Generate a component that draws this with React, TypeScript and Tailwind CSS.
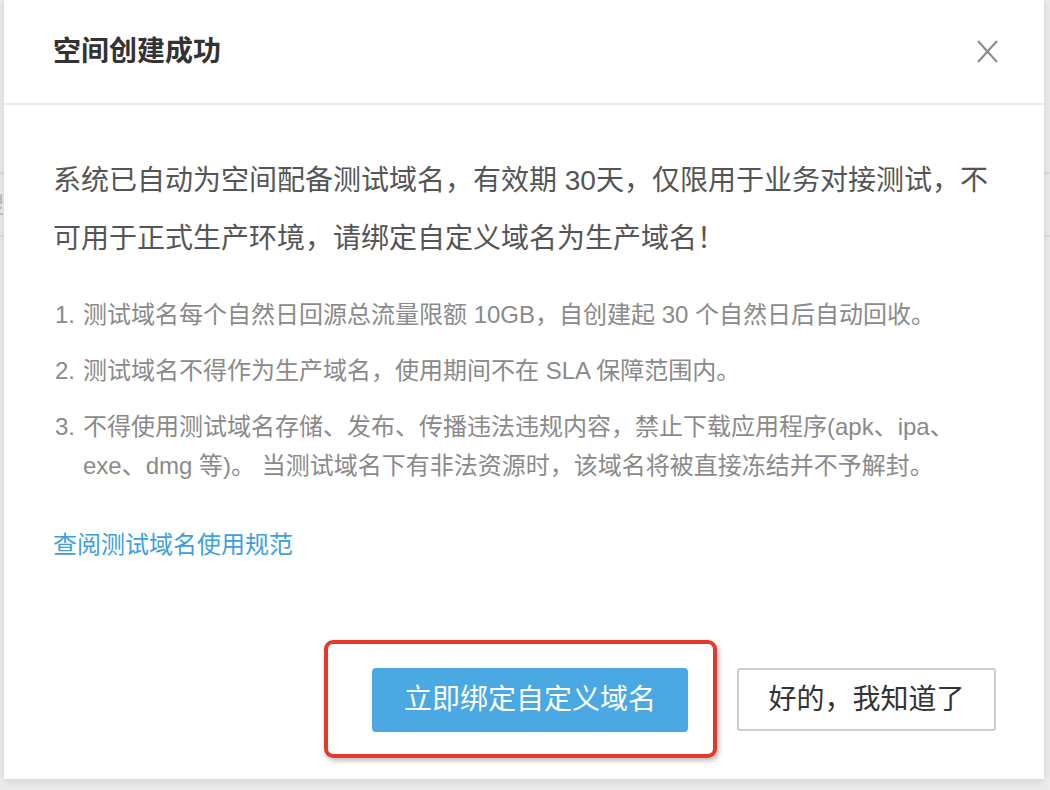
import React from "react";

const font = { fontFamily: '"Liberation Sans", "Noto Sans CJK SC", sans-serif' };

export default function App() {
  return (
    <div className="relative w-[1050px] h-[790px] overflow-hidden bg-[#ececec]" style={font}>
      {/* page behind the modal */}
      <div className="flex flex-col pt-[172px]">
        <div className="h-[2px] bg-[#dedede]" />
        <div className="h-[61px] text-[24px] leading-[61px] text-[#bbb] -ml-[20px]">搜</div>
        <div className="h-[2px] bg-[#dedede]" />
      </div>

      {/* modal */}
      <div className="absolute left-[4px] top-0 w-[1040px] h-[779px] bg-white shadow-[0_2px_10px_rgba(0,0,0,0.12)] flex flex-col">
        <div className="h-[105px] shrink-0 flex items-center justify-between pl-[49px] pr-[46px] border-b-2 border-[#ebebeb]">
          <div className="text-[28px] font-semibold text-[#333] leading-none">空间创建成功</div>
          <svg width="21" height="23" viewBox="0 0 21 23" className="mt-[-1px]">
            <path d="M1 1 L20 22 M20 1 L1 22" stroke="#8a8a8a" strokeWidth="2" fill="none" />
          </svg>
        </div>

        <div className="px-[49px] pt-[47px] flex flex-col">
          <p className="text-[28px] leading-[58px] text-[#555] whitespace-nowrap">
            系统已自动为空间配备测试域名，有效期 30天，仅限用于业务对接测试，不
            <br />
            可用于正式生产环境，请绑定自定义域名为生产域名！
          </p>

          <ul className="mt-[27px] flex flex-col gap-[17px] text-[24px] leading-[39px] text-[#8a8a8a] whitespace-nowrap">
            <li className="flex">
              <span className="w-[30px] pl-[2px] shrink-0">1.</span>
              <span>测试域名每个自然日回源总流量限额 10GB，自创建起 30 个自然日后自动回收。</span>
            </li>
            <li className="flex">
              <span className="w-[30px] pl-[2px] shrink-0">2.</span>
              <span>测试域名不得作为生产域名，使用期间不在 SLA 保障范围内。</span>
            </li>
            <li className="flex">
              <span className="w-[30px] pl-[2px] shrink-0">3.</span>
              <span>
                不得使用测试域名存储、发布、传播违法违规内容，禁止下载应用程序(apk、ipa、
                <br />
                exe、dmg 等)。 当测试域名下有非法资源时，该域名将被直接冻结并不予解封。
              </span>
            </li>
          </ul>

          <a className="mt-[40px] text-[24px] leading-[39px] text-[#3d9fdd] self-start">查阅测试域名使用规范</a>
        </div>

        <div className="mt-[104px] flex justify-end gap-[49px] pr-[48px]">
          <div className="relative">
            <button className="w-[316px] h-[64px] rounded-[4px] bg-[#4aa8e3] text-white text-[28px]">
              立即绑定自定义域名
            </button>
            <div className="absolute -left-[48px] -top-[28px] -right-[29px] -bottom-[26px] border-4 border-[#e6392e] rounded-[9px] shadow-[2px_3px_5px_rgba(0,0,0,0.25)]" />
          </div>
          <button className="w-[259px] h-[63px] rounded-[3px] bg-white border-2 border-[#cdcdcd] text-[#333] text-[28px]">
            好的，我知道了
          </button>
        </div>
      </div>
    </div>
  );
}
